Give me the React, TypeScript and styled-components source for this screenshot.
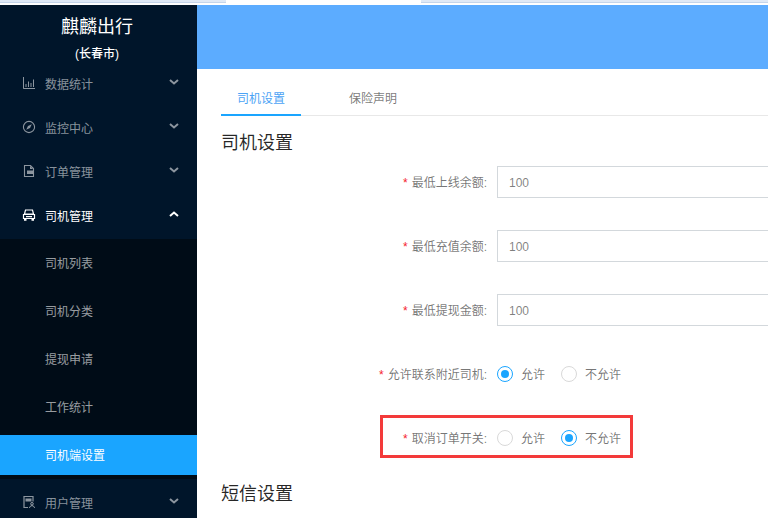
import { ReactNode } from 'react';
import styled, { createGlobalStyle } from 'styled-components';

const GlobalStyle = createGlobalStyle`
  html, body {
    margin: 0;
    padding: 0;
    background: #fff;
  }

  * {
    box-sizing: border-box;
  }
`;

const menuIcons: Record<string, ReactNode> = {
	chart: (
		<g fill='none' stroke='currentColor' strokeWidth='1'>
			<path d='M1.500 1v11.500H13' />
			<path d='M4 11V8M6.500 11V5.500M9 11V7M11.500 11V3.500' />
		</g>
	),
	compass: (
		<g>
			<circle cx='7' cy='7' r='5.600' fill='none' stroke='currentColor' strokeWidth='1.100' />
			<path d='M9.800 4.200 8 8 4.200 9.800 6 6z' fill='currentColor' />
		</g>
	),
	file: (
		<g>
			<path d='M2.500 1.500h6l3 3v8h-9z' fill='none' stroke='currentColor' strokeWidth='1.100' />
			<path d='M5 6.500h6v3.500H5z M8 2v3h3z' fill='currentColor' />
		</g>
	),
	car: (
		<g>
			<path d='M3.500 2h7l1 4h-9z' fill='none' stroke='currentColor' strokeWidth='1.200' />
			<path d='M1.500 6.500h11v4h-11z' fill='none' stroke='currentColor' strokeWidth='1.200' />
			<path d='M2 11h2.500v1.800H2zM9.500 11H12v1.800H9.500zM4 8h6v1.200H4z' fill='currentColor' />
		</g>
	),
	user: (
		<g>
			<path d='M6 12.500H2V1.500h9v5' fill='none' stroke='currentColor' strokeWidth='1.200' />
			<path d='M3.500 3.500h6v3h-6z' fill='currentColor' />
			<circle cx='10' cy='8.800' r='1.300' fill='none' stroke='currentColor' />
			<path d='M7.500 13c0-3 5-3 5 0' fill='none' stroke='currentColor' />
		</g>
	),
};

function MenuIcon({ name }: { name: string }){
	return(
		<IconBox viewBox='0 0 14 14'>
			{menuIcons[name]}
		</IconBox>
	);
}

function MenuArrow({ up }: { up?: boolean }){
	return(
		<ArrowBox viewBox='0 0 10 6'>
			<path
				d={up ? 'M1 5 5 1.500 9 5' : 'M1 1 5 4.500 9 1'}
				fill='none'
				stroke='currentColor'
				strokeWidth='2'
			/>
		</ArrowBox>
	);
}

function MenuRow({ icon, label, active }: { icon: string; label: string; active?: boolean }){
	return(
		<MenuItem $active={active}>
			<MenuIcon name={icon} />
			<MenuLabel>{label}</MenuLabel>
			<MenuArrow up={active} />
		</MenuItem>
	);
}

function Radio({ label, checked }: { label: string; checked?: boolean }){
	return(
		<RadioLabel>
			<RadioDot $checked={checked} />
			<RadioText>{label}</RadioText>
		</RadioLabel>
	);
}

function InputRow({ label }: { label: string }){
	return(
		<FormRow>
			<FieldLabel>{label}:</FieldLabel>
			<TextField readOnly value='100' />
		</FormRow>
	);
}

export default function App(){
	return(
		<Page>
			<GlobalStyle />
			<BrowserStrip>
				<StripTab $width={226} />
				<StripGap />
				<StripTab $width={347} />
			</BrowserStrip>
			<Layout>
				<Sidebar>
					<Brand>
						<BrandName>麒麟出行</BrandName>
						<BrandCity>(长春市)</BrandCity>
					</Brand>
					<MenuRow icon='chart' label='数据统计' />
					<MenuRow icon='compass' label='监控中心' />
					<MenuRow icon='file' label='订单管理' />
					<MenuRow icon='car' label='司机管理' active />
					<SubMenu>
						<SubItem>司机列表</SubItem>
						<SubItem>司机分类</SubItem>
						<SubItem>提现申请</SubItem>
						<SubItem>工作统计</SubItem>
						<SubItem $selected>司机端设置</SubItem>
					</SubMenu>
					<MenuRow icon='user' label='用户管理' />
				</Sidebar>
				<Main>
					<Banner />
					<Content>
						<Tabs>
							<Tab $active>司机设置</Tab>
							<Tab>保险声明</Tab>
						</Tabs>
						<SectionTitle>司机设置</SectionTitle>
						<InputRow label='最低上线余额' />
						<InputRow label='最低充值余额' />
						<InputRow label='最低提现金额' />
						<FormRow>
							<FieldLabel>允许联系附近司机:</FieldLabel>
							<RadioGroup>
								<Radio label='允许' checked />
								<Radio label='不允许' />
							</RadioGroup>
						</FormRow>
						<FormRow $flagged>
							<FieldLabel>取消订单开关:</FieldLabel>
							<RadioGroup>
								<Radio label='允许' />
								<Radio label='不允许' checked />
							</RadioGroup>
						</FormRow>
						<SectionTitle $second>短信设置</SectionTitle>
					</Content>
				</Main>
			</Layout>
		</Page>
	);
}

const Page = styled.div`
  width: 768px;
  height: 518px;
  overflow: hidden;
  font-family: "Liberation Sans", "Noto Sans CJK SC", sans-serif;
  font-size: 12px;
`;

const BrowserStrip = styled.div`
  display: flex;
  height: 5px;
  background: #fff;
`;

const StripTab = styled.div<{ $width: number }>`
  width: ${props => props.$width}px;
  height: 3px;
  background: #dfe9f6;
  border-bottom: 1px solid #c5d5ea;
`;

const StripGap = styled.div`
  width: 195px;
`;

const Layout = styled.div`
  display: flex;
  height: 513px;
`;

const Sidebar = styled.aside`
  width: 197px;
  flex-shrink: 0;
  background: #00152a;
  overflow: hidden;
`;

const Brand = styled.div`
  height: 55px;
  padding: 10px 3px 0 0;
  text-align: center;
  color: #fff;
`;

const BrandName = styled.div`
  font-size: 18px;
  line-height: 24px;
`;

const BrandCity = styled.div`
  margin-top: 7px;
  font-size: 12px;
  line-height: 16px;
  font-weight: 500;
`;

const MenuItem = styled.div<{ $active?: boolean }>`
  display: flex;
  align-items: center;
  height: 40px;
  margin-top: 4px;
  padding: 0 18px 2px 22px;
  color: ${props => props.$active ? '#fff' : 'rgba(255, 255, 255, 0.55)'};
`;

const IconBox = styled.svg`
  width: 14px;
  height: 14px;
  flex-shrink: 0;
`;

const MenuLabel = styled.span`
  flex: 1;
  margin-left: 9px;
`;

const ArrowBox = styled.svg`
  width: 10px;
  height: 6px;
  margin-top: -2px;
`;

const SubMenu = styled.div`
  display: flex;
  flex-direction: column;
  gap: 8px;
  margin-top: 3px;
  padding: 4px 0;
  background: #000c17;
`;

const SubItem = styled.div<{ $selected?: boolean }>`
  height: 40px;
  line-height: 42px;
  padding-left: 45px;
  background: ${props => props.$selected ? '#1aa5ff' : 'transparent'};
  color: ${props => props.$selected ? '#fff' : 'rgba(255, 255, 255, 0.6)'};
`;

const Main = styled.main`
  flex: 1;
  min-width: 0;
  background: #fff;
`;

const Banner = styled.div`
  height: 64px;
  background: #5cacff;
`;

const Content = styled.div`
  padding: 0 0 0 24px;
`;

const Tabs = styled.div`
  display: flex;
  height: 47px;
  border-bottom: 1px solid #e8e8e8;
`;

const Tab = styled.div<{ $active?: boolean }>`
  width: 80px;
  margin-right: 32px;
  margin-bottom: -1px;
  padding-top: 22px;
  line-height: 16px;
  text-align: center;
  color: ${props => props.$active ? '#4ca3f5' : 'rgba(0, 0, 0, 0.55)'};
  border-bottom: 2px solid ${props => props.$active ? '#1aa5ff' : 'transparent'};
`;

const SectionTitle = styled.h2<{ $second?: boolean }>`
  margin: ${props => props.$second ? '27px' : '14px'} 0 ${props => props.$second ? '0' : '10px'};
  font-size: 18px;
  line-height: 26px;
  font-weight: 400;
  color: rgba(0, 0, 0, 0.85);
`;

const FormRow = styled.div<{ $flagged?: boolean }>`
  position: relative;
  display: flex;
  align-items: center;
  height: 32px;
  margin-bottom: 32px;

  &:last-of-type {
    margin-bottom: 0;
  }

  ${props => props.$flagged && `
    &::after {
      content: '';
      box-sizing: border-box;
      position: absolute;
      left: 159px;
      top: -7px;
      width: 253px;
      height: 43px;
      border: 3px solid #f33a3a;
    }
  `}
`;

const FieldLabel = styled.label`
  width: 269px;
  flex-shrink: 0;
  padding: 0 3px 2px 0;
  text-align: right;
  color: rgba(0, 0, 0, 0.55);

  &::before {
    content: '*';
    margin-right: 4px;
    color: #f5222d;
  }
`;

const TextField = styled.input`
  width: 400px;
  height: 32px;
  flex-shrink: 0;
  margin-left: 7px;
  padding: 2px 11px 0;
  border: 1px solid #d3d8dc;
  outline: none;
  font: inherit;
  color: rgba(0, 0, 0, 0.5);
`;

const RadioGroup = styled.div`
  display: flex;
  gap: 16px;
  margin-left: 7px;
`;

const RadioLabel = styled.span`
  display: inline-flex;
  align-items: center;
  color: rgba(0, 0, 0, 0.55);
`;

const RadioText = styled.span`
  padding-bottom: 2px;
`;

const RadioDot = styled.i<{ $checked?: boolean }>`
  position: relative;
  width: 16px;
  height: 16px;
  margin-right: 8px;
  border-radius: 50%;
  border: 1px solid ${props => props.$checked ? '#1aa5ff' : '#d9d9d9'};

  ${props => props.$checked && `
    &::after {
      content: '';
      position: absolute;
      inset: 3px;
      border-radius: 50%;
      background: #1aa5ff;
    }
  `}
`;
